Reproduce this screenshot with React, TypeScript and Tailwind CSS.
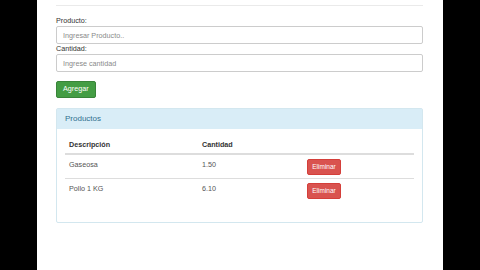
import React from "react";

const rows = [
  { desc: "Gaseosa", qty: "1.50" },
  { desc: "Pollo 1 KG", qty: "6.10" },
];

export default function App() {
  return (
    <div className="flex h-[270px] w-[480px] bg-black font-['Liberation_Sans',Arial,sans-serif] text-[#333]">
      <div className="ml-[37px] h-full w-[406px] bg-white pl-[19px] pr-[20px] pt-[5px]">
        <div className="border-t border-[#eaeaea]" />

        <div className="mt-[10px] text-[7.2px] leading-[10px]">Producto:</div>
        <input
          placeholder="Ingresar Producto.."
          className="block h-[18px] w-full rounded-[2px] border border-[#ccc] px-[6px] text-[7.2px] text-[#555] placeholder:text-[#8a8a8a] outline-none"
        />
        <div className="text-[7.2px] leading-[10px]">Cantidad:</div>
        <input
          placeholder="Ingrese cantidad"
          className="block h-[18px] w-full rounded-[2px] border border-[#ccc] px-[6px] text-[7.2px] text-[#555] placeholder:text-[#8a8a8a] outline-none"
        />

        <button className="mt-[9px] flex h-[17px] items-center rounded-[2px] border border-[#398439] bg-[#449d44] px-[6px] text-[7.2px] text-white">
          Agregar
        </button>

        <div className="mt-[10px] rounded-[2px] border border-[#d3e7ef]">
          <div className="flex h-[20px] items-center bg-[#d9edf7] px-[8px] text-[8px] text-[#31708f]">
            Productos
          </div>
          <div className="px-[8px] pb-[20px] pt-[8px]">
            <table className="w-full border-collapse text-[7.2px]">
              <thead>
                <tr className="border-b-[2px] border-[#ddd]">
                  <th className="h-[17px] w-[133px] px-[4px] text-left align-middle font-bold">Descripción</th>
                  <th className="w-[105px] px-[4px] text-left align-middle font-bold">Cantidad</th>
                  <th className="px-[4px]" />
                </tr>
              </thead>
              <tbody>
                {rows.map((r, i) => (
                  <tr key={r.desc} className={i === 0 ? "border-b border-[#ddd]" : ""}>
                    <td className="h-[24px] px-[4px] pt-[5px] align-top text-[#555]">{r.desc}</td>
                    <td className="px-[4px] pt-[5px] align-top text-[#555]">{r.qty}</td>
                    <td className="px-[4px] pt-[4px] align-top">
                      <button className="flex h-[16px] w-[34px] items-center justify-center rounded-[2px] border border-[#d43f3a] bg-[#d9534f] text-[6.5px] text-white">
                        Eliminar
                      </button>
                    </td>
                  </tr>
                ))}
              </tbody>
            </table>
          </div>
        </div>
      </div>
    </div>
  );
}
